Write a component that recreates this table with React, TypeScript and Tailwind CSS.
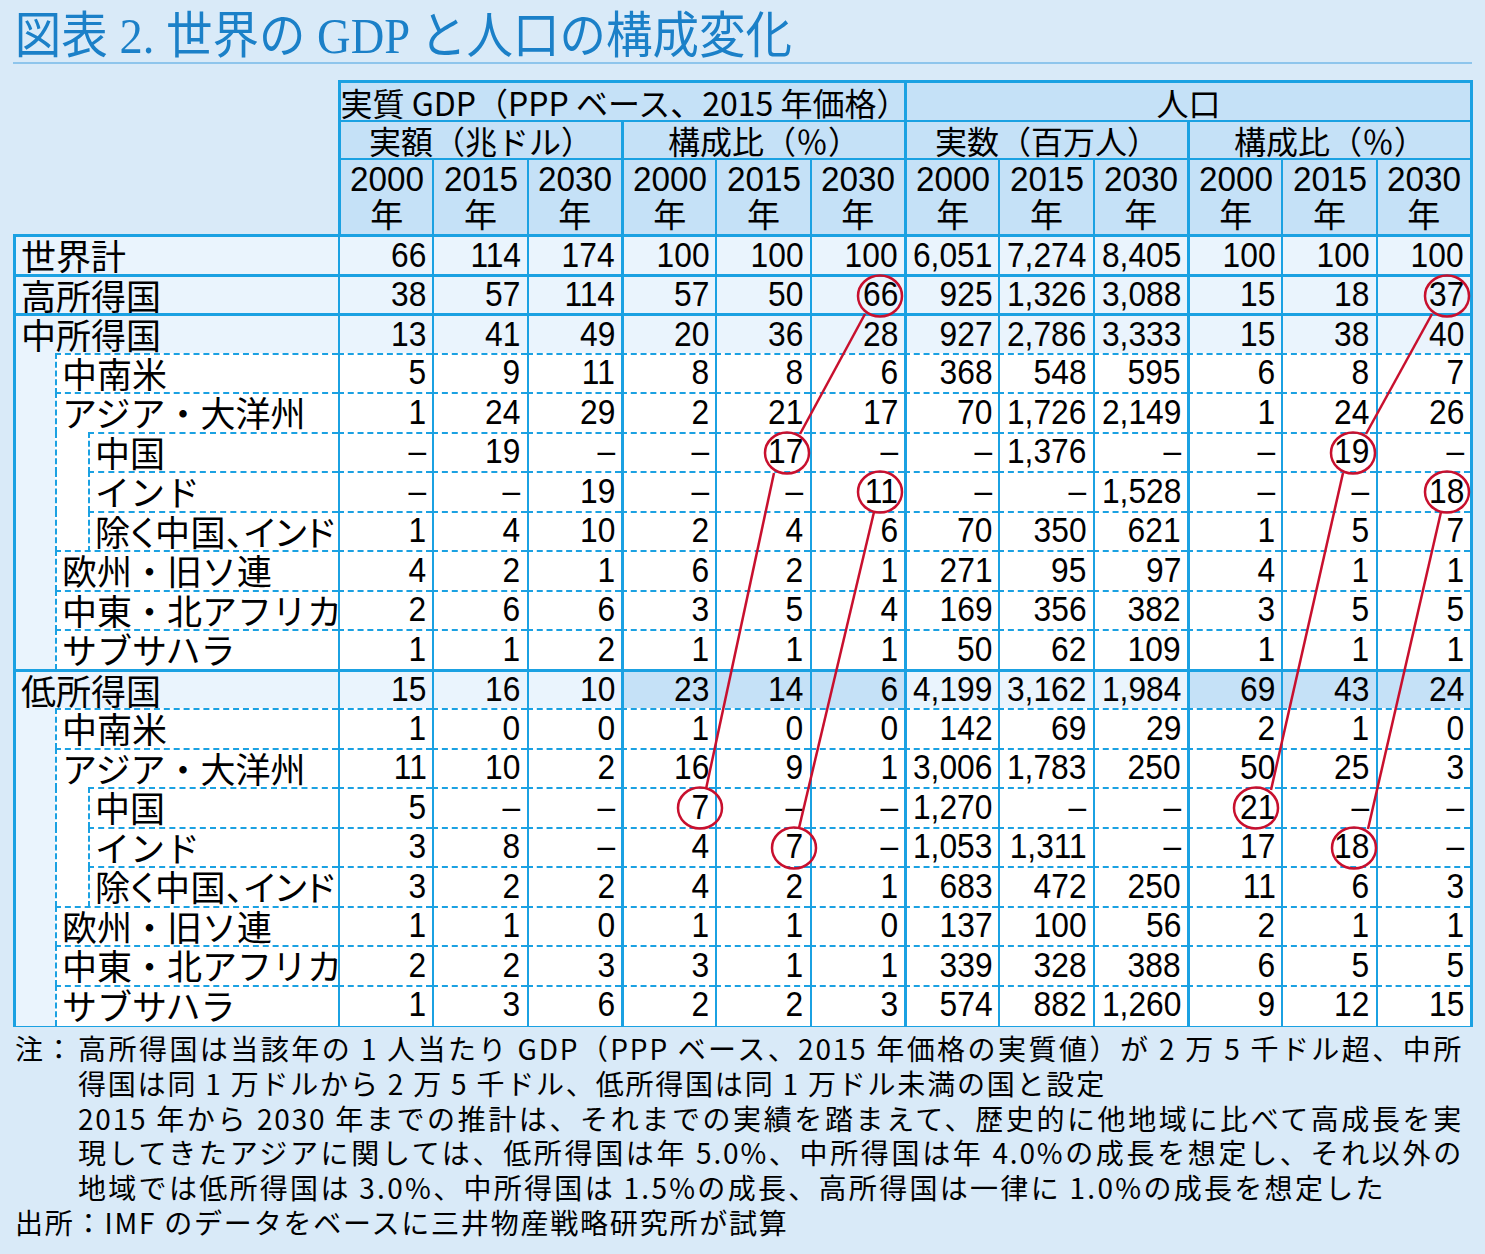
import React from "react";

type Row = { label: string; level: 0 | 1 | 2; vals: string[]; hl?: boolean; palt?: boolean };

const ROWS: Row[] = [
  { label: "世界計", level: 0, vals: ["66", "114", "174", "100", "100", "100", "6,051", "7,274", "8,405", "100", "100", "100"] },
  { label: "高所得国", level: 0, vals: ["38", "57", "114", "57", "50", "66", "925", "1,326", "3,088", "15", "18", "37"] },
  { label: "中所得国", level: 0, vals: ["13", "41", "49", "20", "36", "28", "927", "2,786", "3,333", "15", "38", "40"] },
  { label: "中南米", level: 1, vals: ["5", "9", "11", "8", "8", "6", "368", "548", "595", "6", "8", "7"] },
  { label: "アジア・大洋州", level: 1, vals: ["1", "24", "29", "2", "21", "17", "70", "1,726", "2,149", "1", "24", "26"] },
  { label: "中国", level: 2, vals: ["–", "19", "–", "–", "17", "–", "–", "1,376", "–", "–", "19", "–"] },
  { label: "インド", level: 2, vals: ["–", "–", "19", "–", "–", "11", "–", "–", "1,528", "–", "–", "18"] },
  { label: "除く中国、インド", level: 2, palt: true, vals: ["1", "4", "10", "2", "4", "6", "70", "350", "621", "1", "5", "7"] },
  { label: "欧州・旧ソ連", level: 1, vals: ["4", "2", "1", "6", "2", "1", "271", "95", "97", "4", "1", "1"] },
  { label: "中東・北アフリカ", level: 1, vals: ["2", "6", "6", "3", "5", "4", "169", "356", "382", "3", "5", "5"] },
  { label: "サブサハラ", level: 1, vals: ["1", "1", "2", "1", "1", "1", "50", "62", "109", "1", "1", "1"] },
  { label: "低所得国", level: 0, hl: true, vals: ["15", "16", "10", "23", "14", "6", "4,199", "3,162", "1,984", "69", "43", "24"] },
  { label: "中南米", level: 1, vals: ["1", "0", "0", "1", "0", "0", "142", "69", "29", "2", "1", "0"] },
  { label: "アジア・大洋州", level: 1, vals: ["11", "10", "2", "16", "9", "1", "3,006", "1,783", "250", "50", "25", "3"] },
  { label: "中国", level: 2, vals: ["5", "–", "–", "7", "–", "–", "1,270", "–", "–", "21", "–", "–"] },
  { label: "インド", level: 2, vals: ["3", "8", "–", "4", "7", "–", "1,053", "1,311", "–", "17", "18", "–"] },
  { label: "除く中国、インド", level: 2, palt: true, vals: ["3", "2", "2", "4", "2", "1", "683", "472", "250", "11", "6", "3"] },
  { label: "欧州・旧ソ連", level: 1, vals: ["1", "1", "0", "1", "1", "0", "137", "100", "56", "2", "1", "1"] },
  { label: "中東・北アフリカ", level: 1, vals: ["2", "2", "3", "3", "1", "1", "339", "328", "388", "6", "5", "5"] },
  { label: "サブサハラ", level: 1, vals: ["1", "3", "6", "2", "2", "3", "574", "882", "1,260", "9", "12", "15"] },
];

const YEARS = ["2000", "2015", "2030"];

// red marks drawn over the table (page coordinates)
const CIRCLES: [number, number][] = [
  [880, 296], [1447, 296], [787, 453], [1353, 453], [880, 492],
  [1447, 492], [700, 808], [1256, 808], [794, 848], [1354, 848],
];
const LINES: [number, number, number, number][] = [
  [865, 314, 800, 434],
  [774, 473, 706, 789],
  [874, 512, 799, 828],
  [1432, 314, 1366, 434],
  [1343, 473, 1271, 790],
  [1441, 512, 1368, 829],
];

// narrow digits: Arial metrics squeezed horizontally
const NUM = "inline-block shrink-0 font-['Liberation_Sans',sans-serif] leading-none";

function colLeft(i: number) {
  return i === 3 || i === 6 || i === 9 ? "border-l-[3px]" : "border-l-2";
}

function BodyRow({ row }: { row: Row }) {
  const group = row.level === 0;
  const top = group ? "border-t-[3px]" : "border-t-2 [border-top-style:dashed]";
  const bg = group ? "bg-[#eaf4fd]" : "bg-white";
  return (
    <div className="grid h-[39.5px] grid-cols-[322px_repeat(12,minmax(0,1fr))]">
      <div className="flex h-full">
        {row.level > 0 && <div className="w-[39px] shrink-0 bg-[#eaf4fd]" />}
        {row.level > 1 && <div className="w-[33px] shrink-0 border-l-2 border-dashed border-[#1ba1e2] bg-white" />}
        <div
          className={`flex min-w-0 flex-1 items-center whitespace-nowrap border-[#1ba1e2] pb-[4px] text-[35px] leading-none ${bg} ${
            group ? "border-t-[3px] pl-[5px]" : "border-t-2 border-l-2 border-dashed pl-[5px]"
          } ${row.palt ? "[font-feature-settings:'palt'] tracking-[0.5px]" : ""}`}
        >
          {row.label}
        </div>
      </div>
      {row.vals.map((v, i) => {
        const hl = row.hl && (i === 3 || i === 4 || i === 5 || i === 9 || i === 10 || i === 11);
        return (
          <div
            key={i}
            className={`flex items-center justify-end border-solid border-[#1ba1e2] pb-[3px] pr-[6px] ${top} ${colLeft(i)} ${
              hl ? "bg-[#c5e1f7]" : bg
            }`}
          >
            <span className={`${NUM} origin-right scale-x-[0.92] text-[34.5px]`}>{v}</span>
          </div>
        );
      })}
    </div>
  );
}

function Header() {
  return (
    <div className="ml-[325px] w-[1135px] border-r-[3px] border-t-[3px] border-[#1ba1e2] bg-[#c5e1f7]">
      <div className="grid h-[37px] grid-cols-2">
        <div className="flex items-center justify-center whitespace-nowrap border-l-[3px] border-[#1ba1e2] pl-[4px] text-[32px] leading-none">
          実質 GDP（PPP ベース、2015 年価格）
        </div>
        <div className="flex items-center justify-center border-l-[3px] border-[#1ba1e2] text-[32px] leading-none">
          人口
        </div>
      </div>
      <div className="grid h-[38px] grid-cols-4">
        {["実額（兆ドル）", "構成比（％）", "実数（百万人）", "構成比（％）"].map((t, i) => (
          <div
            key={i}
            className="flex items-center justify-center whitespace-nowrap border-l-[3px] border-t-2 border-[#1ba1e2] text-[32px] leading-none"
          >
            {t}
          </div>
        ))}
      </div>
      <div className="grid h-[76px] grid-cols-12">
        {Array.from({ length: 12 }).map((_, i) => (
          <div
            key={i}
            className={`flex flex-col items-center justify-center border-t-2 border-[#1ba1e2] pb-[2px] ${
              i === 0 ? "border-l-[3px]" : colLeft(i)
            }`}
          >
            <span className={`${NUM} origin-center scale-x-[0.95] text-[35px] leading-[34px]`}>{YEARS[i % 3]}</span>
            <span className="text-[33px] leading-[35px]">年</span>
          </div>
        ))}
      </div>
    </div>
  );
}

function Notes() {
  const just = "w-[1385px] whitespace-nowrap text-justify [text-align-last:justify]";
  return (
    <div className="mt-[4px] text-[28px] leading-[34.8px] tracking-[1.8px]">
      <div className="flex">
        <div className="w-[65px] shrink-0 pl-[2px]">注：</div>
        <div>
          <div className={just}>高所得国は当該年の 1 人当たり GDP（PPP ベース、2015 年価格の実質値）が 2 万 5 千ドル超、中所</div>
          <div className="whitespace-nowrap">得国は同 1 万ドルから 2 万 5 千ドル、低所得国は同 1 万ドル未満の国と設定</div>
          <div className={just}>2015 年から 2030 年までの推計は、それまでの実績を踏まえて、歴史的に他地域に比べて高成長を実</div>
          <div className={just}>現してきたアジアに関しては、低所得国は年 5.0%、中所得国は年 4.0%の成長を想定し、それ以外の</div>
          <div className="whitespace-nowrap tracking-[2.3px]">地域では低所得国は 3.0%、中所得国は 1.5%の成長、高所得国は一律に 1.0%の成長を想定した</div>
        </div>
      </div>
      <div className="pl-[2px]">出所：IMF のデータをベースに三井物産戦略研究所が試算</div>
    </div>
  );
}

export default function App() {
  return (
    <div className="relative h-[1254px] w-[1485px] overflow-hidden bg-[#d9eaf8] font-['Noto_Sans_CJK_JP',sans-serif] text-black">
      <div className="px-[13px] pt-[11px]">
        <h1 className="h-[51px] origin-left scale-x-[0.93] whitespace-nowrap pl-[2px] font-['Liberation_Serif','Noto_Sans_CJK_JP',serif] text-[50px] leading-[51px] text-[#1b80c8]">
          図表 2. 世界の GDP と人口の構成変化
        </h1>
        <div className="h-[2px] bg-[#8ec5ec]" />
      </div>

      <div className="ml-[13px] mt-[16px] w-[1460px]">
        <Header />
        <div className="border-b-[3px] border-l-[3px] border-r-[3px] border-[#1ba1e2]">
          {ROWS.map((r, i) => (
            <BodyRow key={i} row={r} />
          ))}
        </div>
        <Notes />
      </div>

      <svg className="pointer-events-none absolute left-0 top-0" width={1485} height={1254} viewBox="0 0 1485 1254">
        {LINES.map(([x1, y1, x2, y2], i) => (
          <line key={i} x1={x1} y1={y1} x2={x2} y2={y2} stroke="#c8102e" strokeWidth={2.5} />
        ))}
        {CIRCLES.map(([cx, cy], i) => (
          <ellipse key={i} cx={cx} cy={cy} rx={22} ry={20.5} fill="none" stroke="#c8102e" strokeWidth={2.5} />
        ))}
      </svg>
    </div>
  );
}
